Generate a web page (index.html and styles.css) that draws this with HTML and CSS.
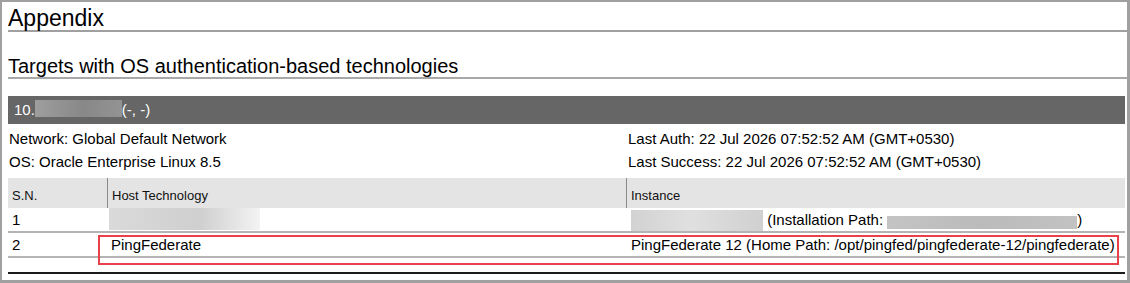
FILE: index.html
```html
<!DOCTYPE html>
<html lang="en">
<head>
    <meta charset="UTF-8">
    <meta name="viewport" content="width=device-width, initial-scale=1.0">
    <title>Appendix</title>
    <link rel="stylesheet" href="styles.css">
</head>
<body>
    <div class="page">
        <h2 class="title">Appendix</h2>
        <h3 class="section">Targets with OS authentication-based technologies</h3>

        <!-- One block per target -->
        <div class="target">
            <div class="target-bar">10.<span class="redact redact-ip"></span>(-, -)</div>

            <div class="target-info">
                <div class="info-wide">Network: Global Default Network</div>
                <div>Last Auth: 22 Jul 2026 07:52:52 AM (GMT+0530)</div>
                <div class="info-wide">OS: Oracle Enterprise Linux 8.5</div>
                <div>Last Success: 22 Jul 2026 07:52:52 AM (GMT+0530)</div>
            </div>

            <div class="tech-table">
                <div class="tech-row tech-head">
                    <div class="cell">S.N.</div>
                    <div class="cell">Host Technology</div>
                    <div class="cell">Instance</div>
                </div>
                <div class="tech-row">
                    <div class="cell">1</div>
                    <div class="cell"><span class="redact redact-host"></span></div>
                    <div class="cell"><span class="redact redact-inst"></span> (Installation Path: <span class="redact redact-path"></span>)</div>
                </div>
                <div class="tech-row flagged">
                    <div class="cell">2</div>
                    <div class="cell">PingFederate</div>
                    <div class="cell">PingFederate 12 (Home Path: /opt/pingfed/pingfederate-12/pingfederate)</div>
                    <div class="highlight"></div>
                </div>
            </div>
            <div class="target-end"></div>
        </div>
    </div>
</body>
</html>
```

FILE: styles.css
```css
body {
    margin: 0;
    font-family: "Liberation Sans", Arial, sans-serif;
    color: #000;
    background: #fff;
}
.page {
    width: 1130px;
    height: 283px;
    box-sizing: border-box;
    border-style: solid;
    border-color: #a0a0a0;
    border-width: 2px 3px 3px 2px;
    padding: 4px 0 0 6px;
    overflow: hidden;
}
.title {
    margin: 0;
    font-size: 23px;
    line-height: 24px;
    font-weight: normal;
    border-bottom: 2px solid #a0a0a0;
}
.section {
    margin: 23px 0 0;
    font-size: 20px;
    line-height: 22px;
    font-weight: normal;
    border-bottom: 2px solid #a8a8a8;
}
.target {
    margin: 17px 2px 0 0;
}
.target-bar {
    height: 28px;
    line-height: 28px;
    padding-left: 6px;
    background-color: #666666;
    color: #fff;
    font-size: 15px;
}
.target-info {
    display: grid;
    grid-template-columns: 618px 1fr;
    margin: 3px 0 5px;
    font-size: 15px;
    line-height: 23px;
}
.target-info > div {
    padding-left: 1px;
}
.target-info > div:nth-child(even) {
    padding-left: 2px;
}
.tech-table {
    font-size: 15px;
}
.tech-row {
    display: grid;
    grid-template-columns: 99px 519px 1fr;
    line-height: 23px;
    border-bottom: 2px solid #b4b4b4;
}
.tech-row .cell {
    padding: 0 4px;
    white-space: nowrap;
}
.tech-head {
    background-color: #e4e4e4;
    font-size: 13px;
    line-height: 16px;
    border-bottom: none;
}
.tech-head .cell {
    padding: 10px 3px 4px 4px;
    color: #111;
}
.tech-head .cell + .cell {
    border-left: 1px solid #8a8a8a;
}
.tech-row:not(.tech-head) .cell:nth-child(2) {
    padding-left: 4px;
}
.tech-row:not(.tech-head) .cell:nth-child(3) {
    padding-left: 5px;
}
.flagged {
    position: relative;
}
/* red outline marking the row under review */
.highlight {
    position: absolute;
    left: 90px;
    top: 2px;
    width: 1021px;
    height: 30px;
    box-sizing: border-box;
    border: 2px solid #e8414a;
}
.target-end {
    margin-top: 14px;
    border-top: 2px solid #1a1a1a;
}

/* masked values */
.redact {
    display: inline-block;
}
.redact-ip {
    width: 87px;
    height: 17px;
    vertical-align: -2px;
    background: linear-gradient(90deg, #9e9e9e, #888888 55%, #939393);
}
.redact-host {
    display: block;
    width: 151px;
    height: 22px;
    margin-left: -2px;
    background: linear-gradient(90deg, #dadada, #cfcfcf 60%, #f3f3f3);
}
.redact-inst {
    width: 132px;
    height: 21px;
    vertical-align: -6px;
    background: linear-gradient(90deg, #d2d2d2, #e0e0e0 45%, #d0d0d0);
}
.redact-path {
    width: 190px;
    height: 13px;
    vertical-align: -4px;
    background: linear-gradient(90deg, #c4c4c4, #bbbbbb 50%, #c2c2c2);
}
```
